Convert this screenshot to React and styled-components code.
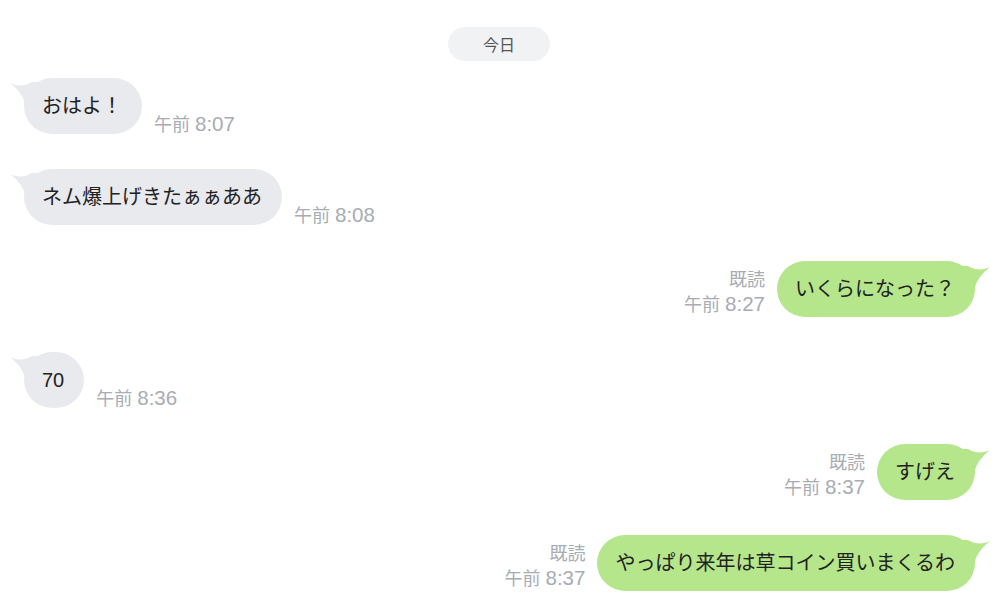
import React from 'react'
import styled, { createGlobalStyle } from 'styled-components'

const GlobalStyle = createGlobalStyle`
  body { margin: 0; background: #fff; font-family: "Liberation Sans", "Noto Sans CJK JP", sans-serif; }
`

const messages = [
  { id: 1, mine: false, text: 'おはよ！', time: '8:07' },
  { id: 2, mine: false, text: 'ネム爆上げきたぁぁああ', time: '8:08' },
  { id: 3, mine: true, text: 'いくらになった？', time: '8:27' },
  { id: 4, mine: false, text: '70', time: '8:36' },
  { id: 5, mine: true, text: 'すげえ', time: '8:37' },
  { id: 6, mine: true, text: 'やっぱり来年は草コイン買いまくるわ', time: '8:37' },
]

const Tail = ({ color, mine }) => (
  <TailSvg mine={mine} width="30" height="32" viewBox="0 0 30 32">
    <path d="M0,5 C6,8 14,9 22,4 L30,4 L30,30 L16,30 C15,20 8,11 0,5 Z" fill={color} />
  </TailSvg>
)

const Time = ({ value }) => (
  <MetaLine>
    午前 <Num>{value}</Num>
  </MetaLine>
)

const App = () => {
  return (
    <>
      <GlobalStyle />
      <Chat>
        <DateRow>
          <DatePill>今日</DatePill>
        </DateRow>
        {messages.map((m) => (
          <Row key={m.id} mine={m.mine}>
            {m.mine && (
              <Meta mine>
                <MetaLine>既読</MetaLine>
                <Time value={m.time} />
              </Meta>
            )}
            <Bubble mine={m.mine}>
              <Tail mine={m.mine} color={m.mine ? '#b5e68c' : '#e8eaee'} />
              <BubbleText>{m.text}</BubbleText>
            </Bubble>
            {!m.mine && (
              <Meta>
                <Time value={m.time} />
              </Meta>
            )}
          </Row>
        ))}
      </Chat>
    </>
  )
}

export default App

const Chat = styled.div`
  display: flex;
  flex-direction: column;
  gap: 35.4px;
  padding: 27px 25px 0 24px;
  width: 1000px;
  height: 615px;
  box-sizing: border-box;
  overflow: hidden;
`

const DateRow = styled.div`
  display: flex;
  justify-content: center;
  margin-bottom: -18.4px;
  padding-right: 1px;
`

const DatePill = styled.div`
  width: 102px;
  height: 34px;
  border-radius: 17px;
  background: #f1f2f4;
  color: #555;
  font-family: "Noto Sans CJK JP", sans-serif;
  font-size: 16px;
  display: flex;
  align-items: center;
  justify-content: center;
`

const Row = styled.div`
  display: flex;
  align-items: flex-end;
  justify-content: ${(p) => (p.mine ? 'flex-end' : 'flex-start')};
  gap: 12px;
`

const Bubble = styled.div`
  position: relative;
  height: 56px;
  padding: 0 20px 0 18px;
  border-radius: 28px;
  background: ${(p) => (p.mine ? '#b5e68c' : '#e8eaee')};
  display: flex;
  align-items: center;
`

const TailSvg = styled.svg`
  position: absolute;
  top: ${(p) => (p.mine ? '1px' : '0')};
  ${(p) => (p.mine ? 'right: -15px; transform: scaleX(-1);' : 'left: -14px;')}
`

const BubbleText = styled.span`
  position: relative;
  font-size: 20px;
  line-height: 28px;
  color: #222;
  white-space: nowrap;
`

const Meta = styled.div`
  display: flex;
  flex-direction: column;
  align-items: ${(p) => (p.mine ? 'flex-end' : 'flex-start')};
  margin-bottom: ${(p) => (p.mine ? '0' : '-3px')};
`

const MetaLine = styled.div`
  font-size: 18px;
  line-height: 23px;
  color: #a8acb4;
  white-space: nowrap;
`

const Num = styled.span`
  font-size: 20.5px;
  line-height: 23px;
`
